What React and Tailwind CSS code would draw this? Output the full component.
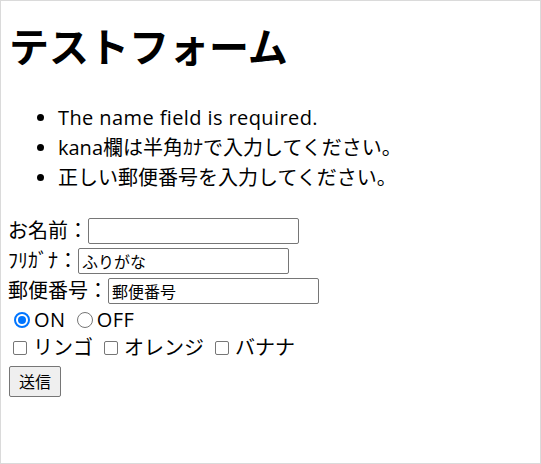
import React from "react";

function Radio({ checked }) {
  return checked ? (
    <span className="ml-[6px] mr-[4px] flex h-[16px] w-[16px] items-center justify-center rounded-full border-[2px] border-[#0075ff] bg-white">
      <span className="h-[8px] w-[8px] rounded-full bg-[#0075ff]" />
    </span>
  ) : (
    <span className="ml-[6px] mr-[4px] h-[16px] w-[16px] rounded-full border border-[#767676] bg-white" />
  );
}

function Check() {
  return <span className="ml-[5px] mr-[6px] h-[14px] w-[14px] rounded-[2px] border border-[#767676] bg-white" />;
}

export default function App() {
  return (
    <div
      className="h-[464px] w-[541px] overflow-hidden border border-[#dadada] bg-white pl-[7px] text-black"
      style={{ fontFamily: '"Open Sans", "Noto Sans CJK JP", sans-serif' }}
    >
      <h1 className="mt-[20px] ml-[1px] text-[40px] font-bold leading-[48px]" style={{ fontFamily: '"Noto Sans CJK JP", sans-serif' }}>
        テストフォーム
      </h1>
      <ul className="mt-[34px] list-disc pl-[50px] text-[20px] leading-[30px]">
        <li className="tracking-[0.4px]">The name field is required.</li>
        <li>kana欄は半角ｶﾅで入力してください。</li>
        <li>正しい郵便番号を入力してください。</li>
      </ul>
      <form className="mt-[23px] text-[20px]">
        <div className="flex h-[30px] items-center">
          <span>お名前：</span>
          <input className="h-[26px] w-[211px] rounded-[2px] border border-[#767676] px-[3px] text-[16px]" />
        </div>
        <div className="flex h-[30px] items-center">
          <span>ﾌﾘｶﾞﾅ：</span>
          <input defaultValue="ふりがな" className="h-[26px] w-[211px] rounded-[2px] border border-[#767676] px-[3px] text-[16px] text-black" />
        </div>
        <div className="flex h-[30px] items-center">
          <span>郵便番号：</span>
          <input defaultValue="郵便番号" className="h-[26px] w-[211px] rounded-[2px] border border-[#767676] px-[3px] text-[16px] text-black" />
        </div>
        <div className="flex h-[28px] items-center">
          <Radio checked />
          <span className="mr-[5px] tracking-[0.5px]">ON</span>
          <Radio />
          <span className="tracking-[0.5px]">OFF</span>
        </div>
        <div className="flex h-[28px] items-center">
          <Check />
          <span className="mr-[6px]">リンゴ</span>
          <Check />
          <span className="mr-[6px]">オレンジ</span>
          <Check />
          <span>バナナ</span>
        </div>
        <button type="button" className="mt-[4px] ml-[1px] h-[31px] rounded-[2px] border border-[#767676] bg-[#efefef] px-[9px] text-[16px] leading-none">
          送信
        </button>
      </form>
    </div>
  );
}
